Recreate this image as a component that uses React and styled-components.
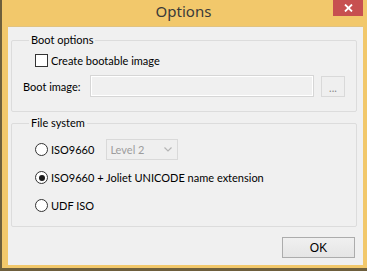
import React from "react";
import styled, { createGlobalStyle } from "styled-components";

const Global = createGlobalStyle`
  html, body { margin: 0; padding: 0; }
  body { width: 367px; height: 271px; overflow: hidden; background: #f2c86b; }
  #root { width: 367px; height: 271px; }
`;

const Window = styled.div`
  box-sizing: border-box;
  width: 367px;
  height: 271px;
  display: flex;
  flex-direction: column;
  background: #f2c86b;
  border-left: 2px solid #6e5f3c;
  border-bottom: 3px solid #6e5f3c;
  font-family: Lato, "Noto Sans", sans-serif;
  font-size: 11px;
  color: #000;
`;

const TitleBar = styled.div`
  height: 26px;
  flex: none;
  display: grid;
  grid-template-columns: 1fr auto 1fr;
  align-items: start;
  margin-left: -2px;
`;

const Title = styled.div`
  grid-column: 2;
  font-size: 15px;
  line-height: 23px;
  color: #3a3a3a;
  font-family: "Noto Sans", "Open Sans", sans-serif;
`;

const Close = styled.div`
  grid-column: 3;
  justify-self: end;
  margin-right: 4px;
  width: 30px;
  height: 16px;
  background: #c75050;
  display: flex;
  align-items: center;
  justify-content: center;
`;

const Client = styled.div`
  box-sizing: border-box;
  margin: 0 4px 3px 6px;
  flex: 1;
  background: #f0f0f0;
  padding: 5px 6px 0 3px;
  display: flex;
  flex-direction: column;
  border-top: 1px solid #e2c37f;
`;

const Group = styled.fieldset`
  box-sizing: border-box;
  margin: ${(p) => p.$mt || 0}px 0 0 0;
  border: 1px solid #dcdcdc;
  border-radius: 2px;
  padding: 0 10px 0 11px;
  height: ${(p) => p.$h}px;
  min-width: 0;
`;

const Legend = styled.legend`
  padding: 0 2px;
  margin-left: 6px;
  line-height: 16px;
  color: #000;
`;

const Body = styled.div`
  display: flex;
  flex-direction: column;
  gap: ${(p) => p.$gap}px;
  padding-top: ${(p) => p.$pt}px;
`;

const Row = styled.div`
  display: flex;
  align-items: center;
  height: ${(p) => p.$h || 21}px;
  margin-left: ${(p) => p.$indent || 0}px;
`;

const CheckBox = styled.span`
  box-sizing: border-box;
  width: 13px;
  height: 13px;
  border: 1px solid #333;
  background: #fff;
  margin-right: 3px;
  flex: none;
`;

const Radio = styled.span`
  box-sizing: border-box;
  width: 13px;
  height: 13px;
  border: 1px solid #333;
  border-radius: 50%;
  background: #fff;
  margin-right: 3px;
  flex: none;
  display: flex;
  align-items: center;
  justify-content: center;
  &::after {
    content: "";
    width: 6px;
    height: 6px;
    border-radius: 50%;
    background: ${(p) => (p.$checked ? "#1a1a1a" : "transparent")};
  }
`;

const Label = styled.span`
  white-space: nowrap;
  color: #000;
`;

const FieldLabel = styled.span`
  width: 67px;
  flex: none;
  white-space: nowrap;
`;

const TextBox = styled.div`
  box-sizing: border-box;
  width: 224px;
  height: 22px;
  border: 1px solid #d6d6d6;
  box-shadow: 1px 1px 0 #ffffff inset, -1px -1px 0 #ffffff inset;
  background: #f0f0f0;
`;

const Browse = styled.div`
  box-sizing: border-box;
  width: 24px;
  height: 21px;
  margin-left: 7px;
  border: 1px solid #d9d9d9;
  background: #efefef;
  color: #8a8a8a;
  display: flex;
  align-items: center;
  justify-content: center;
  font-size: 11px;
  line-height: 1;
  padding-top: 2px;
`;

const Select = styled.div`
  box-sizing: border-box;
  width: 72px;
  height: 21px;
  margin-left: 12px;
  border: 1px solid #d9d9d9;
  background: #efefef;
  color: #9d9d9d;
  display: flex;
  align-items: center;
  justify-content: space-between;
  padding: 0 5px 0 3px;
`;

const Footer = styled.div`
  display: flex;
  justify-content: flex-end;
  margin-top: 10px;
  padding-right: 2px;
`;

const Button = styled.div`
  box-sizing: border-box;
  width: 73px;
  height: 21px;
  border: 1px solid #acacac;
  background: linear-gradient(#f0f0f0, #e5e5e5);
  display: flex;
  align-items: center;
  justify-content: center;
  font-family: "Liberation Sans", Arial, sans-serif;
  font-size: 12px;
  color: #000;
`;

export default function App() {
  return (
    <>
      <Global />
      <Window>
        <TitleBar>
          <Title>Options</Title>
          <Close>
            <svg width="9" height="8" viewBox="0 0 9 8">
              <path d="M1 0.5 L8 7.5 M8 0.5 L1 7.5" stroke="#fff" strokeWidth="1.8" />
            </svg>
          </Close>
        </TitleBar>
        <Client>
          <Group $h={80}>
            <Legend>Boot options</Legend>
            <Body $gap={8} $pt={6}>
              <Row $h={13} $indent={12}>
                <CheckBox />
                <Label>Create bootable image</Label>
              </Row>
              <Row $h={22}>
                <FieldLabel>Boot image:</FieldLabel>
                <TextBox />
                <Browse>...</Browse>
              </Row>
            </Body>
          </Group>
          <Group $h={112} $mt={3}>
            <Legend>File system</Legend>
            <Body $gap={7} $pt={8}>
              <Row $indent={12}>
                <Radio />
                <Label>ISO9660</Label>
                <Select>
                  <span>Level 2</span>
                  <svg width="8" height="5" viewBox="0 0 8 5">
                    <path d="M0.5 0.5 L4 4 L7.5 0.5" stroke="#b5b5b5" strokeWidth="1.2" fill="none" />
                  </svg>
                </Select>
              </Row>
              <Row $indent={12}>
                <Radio $checked />
                <Label>ISO9660 + Joliet UNICODE name extension</Label>
              </Row>
              <Row $indent={12}>
                <Radio />
                <Label>UDF ISO</Label>
              </Row>
            </Body>
          </Group>
          <Footer>
            <Button>OK</Button>
          </Footer>
        </Client>
      </Window>
    </>
  );
}
